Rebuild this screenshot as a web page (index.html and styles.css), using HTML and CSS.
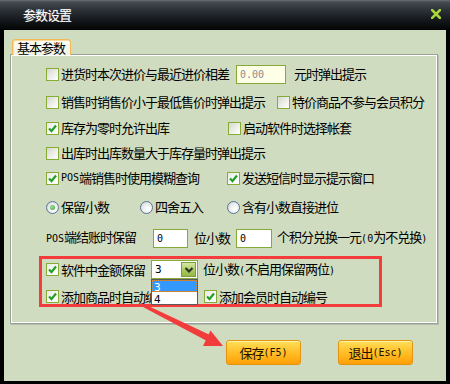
FILE: index.html
```html
<!DOCTYPE html>
<html>
<head>
<meta charset="utf-8">
<link rel="stylesheet" href="styles.css">
</head>
<body>
<div class="win">
  <div class="titlebar">
    <span class="title">参数设置</span>
    <svg class="close" width="10" height="10" viewBox="0 0 10 10"><path d="M1 1 L9 9 M9 1 L1 9" stroke="#a6d63a" stroke-width="2.6" stroke-linecap="square"/></svg>
  </div>
  <div class="client">
    <div class="tab">基本参数</div>
    <div class="panel">
      <div class="row h28">
        <label class="item"><span class="cb"></span>进货时本次进价与最近进价相差</label>
        <span class="inp inp-money"><span class="lat grey">0.00</span></span>
        <span class="txt ml8">元时弹出提示</span>
      </div>
      <div class="row h28">
        <label class="item w231"><span class="cb"></span>销售时销售价小于最低售价时弹出提示</label>
        <label class="item"><span class="cb"></span>特价商品不参与会员积分</label>
      </div>
      <div class="row h24">
        <label class="item w182"><span class="cb on"><svg viewBox="0 0 11 11"><path d="M2 5.5 L4.5 8 L9 2.5" fill="none" stroke="#22a02a" stroke-width="2.2"/></svg></span>库存为零时允许出库</label>
        <label class="item"><span class="cb"></span>启动软件时选择帐套</label>
      </div>
      <div class="row h26">
        <label class="item"><span class="cb"></span>出库时出库数量大于库存量时弹出提示</label>
      </div>
      <div class="row h24">
        <label class="item w181"><span class="cb on"><svg viewBox="0 0 11 11"><path d="M2 5.5 L4.5 8 L9 2.5" fill="none" stroke="#22a02a" stroke-width="2.2"/></svg></span><span class="lat">POS</span>端销售时使用模糊查询</label>
        <label class="item"><span class="cb on"><svg viewBox="0 0 11 11"><path d="M2 5.5 L4.5 8 L9 2.5" fill="none" stroke="#22a02a" stroke-width="2.2"/></svg></span>发送短信时显示提示窗口</label>
      </div>
      <div class="row h34">
        <label class="item w94"><span class="rb sel"></span>保留小数</label>
        <label class="item w87"><span class="rb"></span>四舍五入</label>
        <label class="item"><span class="rb"></span>含有小数直接进位</label>
      </div>
      <div class="row h28">
        <span class="txt"><span class="lat">POS</span>端结账时保留</span>
        <span class="inp inp-a"><span class="lat">0</span></span>
        <span class="txt ml6">位小数</span>
        <span class="inp inp-b"><span class="lat">0</span></span>
        <span class="txt ml5">个积分兑换一元<span class="lat">(0</span>为不兑换<span class="lat">)</span></span>
      </div>
      <div class="redbox">
        <div class="row h21">
          <label class="item"><span class="cb on"><svg viewBox="0 0 11 11"><path d="M2 5.5 L4.5 8 L9 2.5" fill="none" stroke="#22a02a" stroke-width="2.2"/></svg></span>软件中金额保留</label>
          <div class="select">
            <span class="lat sel-val">3</span>
            <span class="sel-btn"><svg width="10" height="8" viewBox="0 0 10 8"><path d="M1.5 2 L5 5.5 L8.5 2" fill="none" stroke="#2c3320" stroke-width="2.2"/></svg></span>
            <div class="dropdown">
              <div class="opt active"><span class="lat">3</span></div>
              <div class="opt"><span class="lat">4</span></div>
            </div>
          </div>
          <span class="txt ml5">位小数<span class="lat">(</span>不启用保留两位<span class="lat">)</span></span>
        </div>
        <div class="row h15 mt9">
          <label class="item w158"><span class="cb on"><svg viewBox="0 0 11 11"><path d="M2 5.5 L4.5 8 L9 2.5" fill="none" stroke="#22a02a" stroke-width="2.2"/></svg></span>添加商品时自动编号</label>
          <label class="item"><span class="cb on"><svg viewBox="0 0 11 11"><path d="M2 5.5 L4.5 8 L9 2.5" fill="none" stroke="#22a02a" stroke-width="2.2"/></svg></span>添加会员时自动编号</label>
        </div>
      </div>
    </div>
    <div class="buttons">
      <button class="btn">保存<span class="lat">(F5)</span></button>
      <button class="btn">退出<span class="lat">(Esc)</span></button>
    </div>
  </div>
  <svg class="arrow" width="450" height="384" viewBox="0 0 450 384">
    <polygon points="142,303 143,307 207,341 210,335" fill="#f23c3c"/>
    <polygon points="223,346 210.5,330.5 203,346" fill="#f23c3c"/>
  </svg>
</div>
</body>
</html>
```

FILE: styles.css
```css
* { box-sizing: border-box; margin: 0; padding: 0; }
html, body { width: 450px; height: 384px; overflow: hidden; background: #000; }
body {
  font-family: "Noto Sans CJK SC", "Noto Sans CJK JP", sans-serif;
  font-size: 13px;
  letter-spacing: -1px;
  line-height: 14px;
  color: #000;
}
.win { position: relative; width: 450px; height: 384px; background: #000; }

.titlebar {
  height: 29px;
  display: flex;
  align-items: center;
  justify-content: space-between;
  padding: 0 9px 0 23px;
  background: linear-gradient(#6b7076 0, #454b51 2px, #2c3136 10px, #15191c 20px, #060809 28px);
}
.title { color: #fff; font-size: 13px; letter-spacing: -1px; text-shadow: 0 0 1px rgba(255,255,255,0.4); }
.close { display: block; margin-top: -1px; }

.client {
  margin: 1px 4px 0 4px;
  height: 351px;
  background: #d0dcbf;
  padding: 9px 8px 0 6px;
}

.tab {
  position: relative;
  z-index: 2;
  margin-left: 2px;
  width: 59px;
  height: 16px;
  margin-bottom: -1px;
  border: 1px solid #f2b955;
  border-bottom: none;
  border-radius: 4px 4px 0 0;
  background: linear-gradient(#fdfdf4, #f0f2e4);
  box-shadow: inset 1px 1px 0 #fbd99a;
  padding-left: 4px;
  line-height: 15px;
}

.panel {
  width: 428px;
  height: 270px;
  border: 1px solid #9aa198;
  box-shadow: inset 1px 1px 0 #fff, inset -1px -1px 0 #fff, 1px 1px 0 #b4bcaa;
  padding: 5px 0 0 35px;
}

.row { display: flex; align-items: center; white-space: nowrap; }
.h15 { height: 15px; }
.h21 { height: 21px; }
.h24 { height: 24px; }
.h26 { height: 26px; }
.h28 { height: 28px; }
.h34 { height: 34px; }
.mt9 { margin-top: 9px; }
.ml5 { margin-left: 5px; }
.ml6 { margin-left: 6px; }
.ml8 { margin-left: 8px; }
.w87 { width: 87px; }
.w94 { width: 94px; }
.w158 { width: 158px; }
.w181 { width: 181px; }
.w182 { width: 182px; }
.w231 { width: 231px; }

.item { display: flex; align-items: center; flex: none; }

.lat { font-family: "DejaVu Sans Mono", "Liberation Mono", monospace; font-size: 10px; letter-spacing: 0; }
.grey { color: #8c8c8c; }

.cb {
  width: 13px;
  height: 13px;
  margin-right: 2px;
  flex: none;
  border: 1px solid #86ac36;
  background: linear-gradient(135deg, #d6d6d0 0%, #efefea 55%, #ffffff 100%);
  display: flex;
  align-items: center;
  justify-content: center;
}
.cb.on { background: linear-gradient(135deg, #e8e8e2 0%, #fafaf8 60%, #fff 100%); }
.cb svg { width: 11px; height: 11px; display: block; }

.rb {
  width: 13px;
  height: 13px;
  margin-right: 2px;
  flex: none;
  border-radius: 50%;
  border: 1px solid #5a7397;
  background: radial-gradient(circle at 65% 65%, #ffffff 0%, #eef0f0 45%, #c8cdd2 100%);
  position: relative;
}
.rb.sel::after {
  content: "";
  position: absolute;
  left: 3px; top: 3px;
  width: 5px; height: 5px;
  border-radius: 50%;
  background: radial-gradient(circle at 40% 40%, #a6e49a, #2e9a36);
}

.inp {
  flex: none;
  height: 19px;
  border: 1px solid #86aa38;
  background: #fff;
  padding-left: 3px;
  line-height: 17px;
  display: flex;
  align-items: center;
}
.inp-money { width: 50px; margin-left: 7px; background: #ffffe8; }
.inp-a { width: 35px; margin-left: 17px; }
.inp-b { width: 36px; margin-left: 6px; }

.redbox {
  margin-top: 4px;
  margin-left: -7px;
  width: 343px;
  height: 51px;
  border: 3px solid #f53c3c;
  padding-left: 4px;
}

.select {
  position: relative;
  flex: none;
  width: 47px;
  height: 19px;
  margin-left: 6px;
  border: 1px solid #86aa38;
  background: #fff;
  display: flex;
  align-items: center;
  padding-left: 3px;
}
.sel-val { flex: 1; font-size: 11px; }
.sel-btn {
  width: 15px;
  height: 15px;
  margin-right: 1px;
  border: 1px solid #7d9e36;
  background: linear-gradient(#d4e8a4, #a6c85e 60%, #94b848);
  display: flex;
  align-items: center;
  justify-content: center;
}
.sel-btn svg { display: block; }
.dropdown {
  position: absolute;
  left: -1px;
  top: 18px;
  width: 47px;
  height: 26px;
  border: 1px solid #5b5b5b;
  background: #fff;
  z-index: 3;
}
.opt { height: 12px; line-height: 12px; padding-left: 2px; }
.opt .lat { font-size: 11px; }
.opt.active { background: #3399ff; color: #fff; outline: 1px dotted #d98a3a; outline-offset: -1px; }

.buttons { display: flex; gap: 37px; margin-top: 16px; padding-left: 216px; }
.btn {
  width: 75px;
  height: 25px;
  border: 1px solid #e39412;
  border-radius: 3px;
  background: linear-gradient(#ffdf5a 0%, #ffc22c 45%, #ff9f06 100%);
  box-shadow: inset 0 1px 0 #fff2a8;
  font-family: "Noto Sans CJK SC", sans-serif;
  font-size: 13px;
  letter-spacing: -1px;
  color: #1c1200;
  display: flex;
  align-items: center;
  justify-content: center;
}

.arrow { position: absolute; left: 0; top: 0; pointer-events: none; z-index: 5; }
```
